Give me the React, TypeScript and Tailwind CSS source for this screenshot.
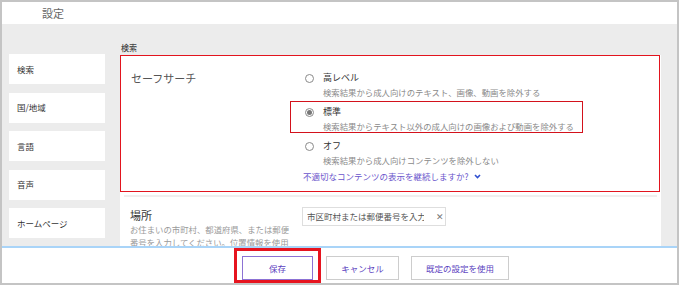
import React from 'react';

const navItems = ['検索', '国/地域', '言語', '音声', 'ホームページ'];

const options = [
    { label: '高レベル', desc: '検索結果から成人向けのテキスト、画像、動画を除外する', checked: false },
    { label: '標準', desc: '検索結果からテキスト以外の成人向けの画像および動画を除外する', checked: true },
    { label: 'オフ', desc: '検索結果から成人向けコンテンツを除外しない', checked: false },
];

const Radio: React.FC<{ checked: boolean }> = ({ checked }) => (
    <div className="mt-[3px] flex h-[9px] w-[9px] shrink-0 items-center justify-center rounded-full border border-[#8a8a8a] bg-white">
        {checked && <div className="h-[5px] w-[5px] rounded-full bg-[#777]"></div>}
    </div>
);

const App: React.FC = () => {
    return (
        <div
            className="flex h-[285px] w-[679px] flex-col overflow-hidden border-2 border-[#c4c4c4] bg-white"
            style={{ fontFamily: '"Noto Sans CJK JP", "Noto Sans", sans-serif' }}
        >
            {/* header */}
            <div className="flex h-[22px] shrink-0 items-center pl-[40px] text-[11px] text-[#666]">設定</div>

            {/* body */}
            <div className="flex min-h-0 flex-1 overflow-hidden bg-[#ececec]">
                <div className="flex w-[118px] shrink-0 flex-col gap-[8.5px] pt-[30px] pl-[7px]">
                    {navItems.map((item) => (
                        <div key={item} className="flex h-[30px] w-[96px] items-center bg-white pl-[8px] text-[8.5px] text-[#333]">
                            {item}
                        </div>
                    ))}
                </div>

                <div className="flex w-[541px] shrink-0 flex-col pt-[16px]">
                    <div className="h-[15px] pl-[1px] text-[8px] leading-[15px] font-medium text-[#444]">検索</div>

                    <div className="flex flex-col bg-white">
                        {/* safe search */}
                        <div className="flex h-[137px] w-[540px] border border-[#e2141e]">
                            <div className="w-[169px] shrink-0 pt-[12px] pl-[10px] text-[11px] leading-[20px] text-[#555]">セーフサーチ</div>
                            <div className="flex flex-col pt-[11px]">
                                <div className="flex flex-col gap-[2px]">
                                    {options.map((opt) => (
                                        <div
                                            key={opt.label}
                                            className={`flex h-[32px] w-[293px] gap-[9px] border pt-[3px] pl-[14px] ${
                                                opt.checked ? 'border-[#d3121c]' : 'border-transparent'
                                            }`}
                                        >
                                            <Radio checked={opt.checked} />
                                            <div className="flex flex-col">
                                                <div className="text-[9px] leading-[14px] text-[#333]">{opt.label}</div>
                                                <div className="text-[8.4px] leading-[14px] whitespace-nowrap text-[#8a8a8a]">{opt.desc}</div>
                                            </div>
                                        </div>
                                    ))}
                                </div>
                                <div className="mt-[2px] flex items-center gap-[5px] pl-[13px] text-[8.5px] leading-[14px] text-[#6a55cc]">
                                    <span>不適切なコンテンツの表示を継続しますか?</span>
                                    <svg width="7" height="5" viewBox="0 0 7 5" className="mt-[1px]">
                                        <path d="M1 1l2.5 2.5L6 1" fill="none" stroke="#3050d0" strokeWidth="1.6" />
                                    </svg>
                                </div>
                            </div>
                        </div>

                        <div className="mx-[4px] mt-[3px] h-[2px] bg-[#efefef]"></div>

                        {/* location */}
                        <div className="flex">
                            <div className="w-[182px] shrink-0 pt-[10px] pr-[10px] pl-[10px]">
                                <div className="text-[11px] leading-[16px] text-[#333]">場所</div>
                                <div className="text-[8.4px] leading-[13px] text-[#9a9a9a]">
                                    お住まいの市町村、都道府県、または郵便番号を入力してください。位置情報を使用して、より関連性の高い検索結果が表示されます。
                                </div>
                            </div>
                            <div className="pt-[10px]">
                                <div className="flex h-[19px] w-[144px] items-center border border-[#dedede] pl-[4px] text-[8.5px] text-[#555]">
                                    <div className="w-[117px] overflow-hidden whitespace-nowrap">市区町村または郵便番号を入力</div>
                                    <span className="ml-[12px] text-[9px] leading-none text-[#777]">✕</span>
                                </div>
                            </div>
                        </div>
                    </div>
                </div>
            </div>

            {/* footer */}
            <div className="flex h-[37px] shrink-0 items-start border-t-2 border-[#a9d4f8] bg-white pl-[232px]">
                <div className="h-[35px] border-[3px] border-[#e6141f] px-[5px] pt-[5px]">
                    <button className="flex h-[24px] w-[71px] items-center justify-center border border-[#8c72d4] bg-white text-[8.5px] text-[#5b3fc0]">
                        保存
                    </button>
                </div>
                <button className="mt-[8px] ml-[5px] flex h-[24px] w-[73px] items-center justify-center border border-[#cdcdcd] bg-white text-[8.5px] text-[#5b3fc0]">
                    キャンセル
                </button>
                <button className="mt-[8px] ml-[12px] flex h-[24px] w-[98px] items-center justify-center border border-[#cdcdcd] bg-white text-[8.5px] text-[#5b3fc0]">
                    既定の設定を使用
                </button>
            </div>
        </div>
    );
};

export default App;
